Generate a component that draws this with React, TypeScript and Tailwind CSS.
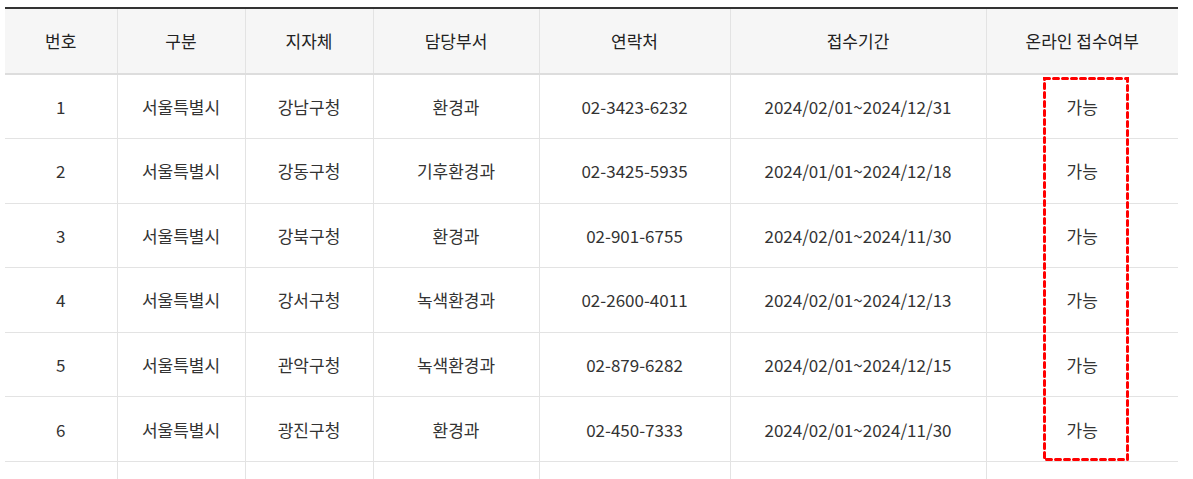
import React from 'react';

const columns = [
  { label: '번호', width: 'w-[112px]' },
  { label: '구분', width: 'w-[128px]' },
  { label: '지자체', width: 'w-[128px]' },
  { label: '담당부서', width: 'w-[166px]' },
  { label: '연락처', width: 'w-[191px]' },
  { label: '접수기간', width: 'w-[256px]' },
  { label: '온라인 접수여부', width: 'w-[192px]' },
];

const rows = [
  ['1', '서울특별시', '강남구청', '환경과', '02-3423-6232', '2024/02/01~2024/12/31', '가능'],
  ['2', '서울특별시', '강동구청', '기후환경과', '02-3425-5935', '2024/01/01~2024/12/18', '가능'],
  ['3', '서울특별시', '강북구청', '환경과', '02-901-6755', '2024/02/01~2024/11/30', '가능'],
  ['4', '서울특별시', '강서구청', '녹색환경과', '02-2600-4011', '2024/02/01~2024/12/13', '가능'],
  ['5', '서울특별시', '관악구청', '녹색환경과', '02-879-6282', '2024/02/01~2024/12/15', '가능'],
  ['6', '서울특별시', '광진구청', '환경과', '02-450-7333', '2024/02/01~2024/11/30', '가능'],
  ['', '', '', '', '', '', ''],
];

export default function App() {
  return (
    <div
      className="w-[1193px] h-[479px] overflow-hidden bg-white pt-[7px] pl-[5px]"
      style={{ fontFamily: '"Noto Sans CJK KR", "Noto Sans", sans-serif' }}
    >
      <div className="relative w-[1173px]">
        <table className="w-[1173px] table-fixed border-collapse border-t-2 border-[#333] text-[17px]">
          <thead>
            <tr className="bg-[#f6f6f6]">
              {columns.map((col, i) => (
                <th
                  key={col.label}
                  className={`${col.width} h-[66px] border-b-2 border-b-[#dddddd] font-normal text-[#222] ${
                    i > 0 ? 'border-l border-l-[#e3e3e3]' : ''
                  }`}
                >
                  {col.label}
                </th>
              ))}
            </tr>
          </thead>
          <tbody>
            {rows.map((row, r) => (
              <tr key={r}>
                {row.map((cell, i) => (
                  <td
                    key={i}
                    className={`h-[64.6px] border-b border-b-[#e3e3e3] text-center text-[#333] ${
                      i > 0 ? 'border-l border-l-[#e3e3e3]' : ''
                    }`}
                  >
                    {cell}
                  </td>
                ))}
              </tr>
            ))}
          </tbody>
        </table>

        {/* highlight over the online column */}
        <svg
          className="absolute left-[1038px] top-[70px]"
          width="86"
          height="384"
          viewBox="0 0 86 384"
        >
          <rect
            x="1.5"
            y="1.5"
            width="83"
            height="381"
            fill="none"
            stroke="#ff0000"
            strokeWidth="3"
            strokeDasharray="5 4"
            strokeLinecap="round"
          />
        </svg>
      </div>
    </div>
  );
}
